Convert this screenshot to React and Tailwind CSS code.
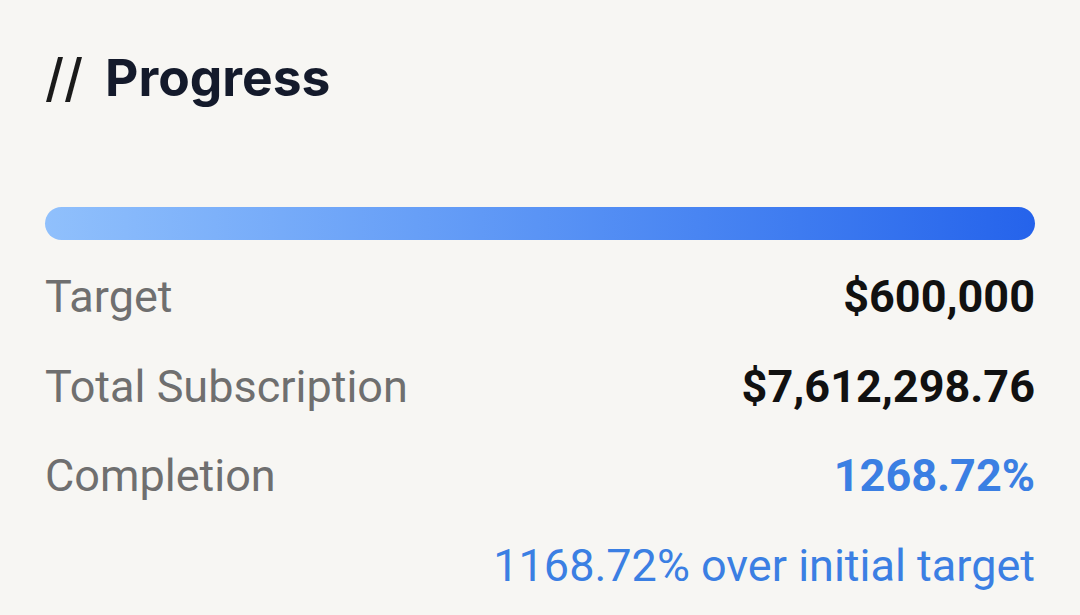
import React from "react";

const rows = [
  { label: "Target", value: "$600,000", tone: "text-[#111111]" },
  { label: "Total Subscription", value: "$7,612,298.76", tone: "text-[#111111]" },
  { label: "Completion", value: "1268.72%", tone: "text-[#3b7fe3]" },
];

export default function App() {
  return (
    <div className="min-h-[615px] w-full bg-[#f7f6f3] px-[45px] pt-[45px] font-['Roboto',sans-serif]">
      <h2 className="flex items-baseline gap-[22px] text-[51.5px] leading-[64px] font-['Inter',sans-serif]">
        <span className="font-medium text-[#1a1a1a]">//</span>
        <span className="font-bold text-[#141a2b]">Progress</span>
      </h2>

      <div className="mt-[98px] h-[33px] w-full rounded-full bg-gradient-to-r from-[#90c0fc] to-[#2563eb]"></div>

      <div className="mt-[31px] flex flex-col gap-[37.5px]">
        {rows.map((row) => (
          <div key={row.label} className="flex items-center justify-between text-[45px] leading-[52px]">
            <span className="text-[#6f6f6f]">{row.label}</span>
            <span className={`font-bold ${row.tone}`}>{row.value}</span>
          </div>
        ))}
        <div className="text-right text-[45px] leading-[52px] text-[#3b7fe3]">
          1168.72% over initial target
        </div>
      </div>
    </div>
  );
}
